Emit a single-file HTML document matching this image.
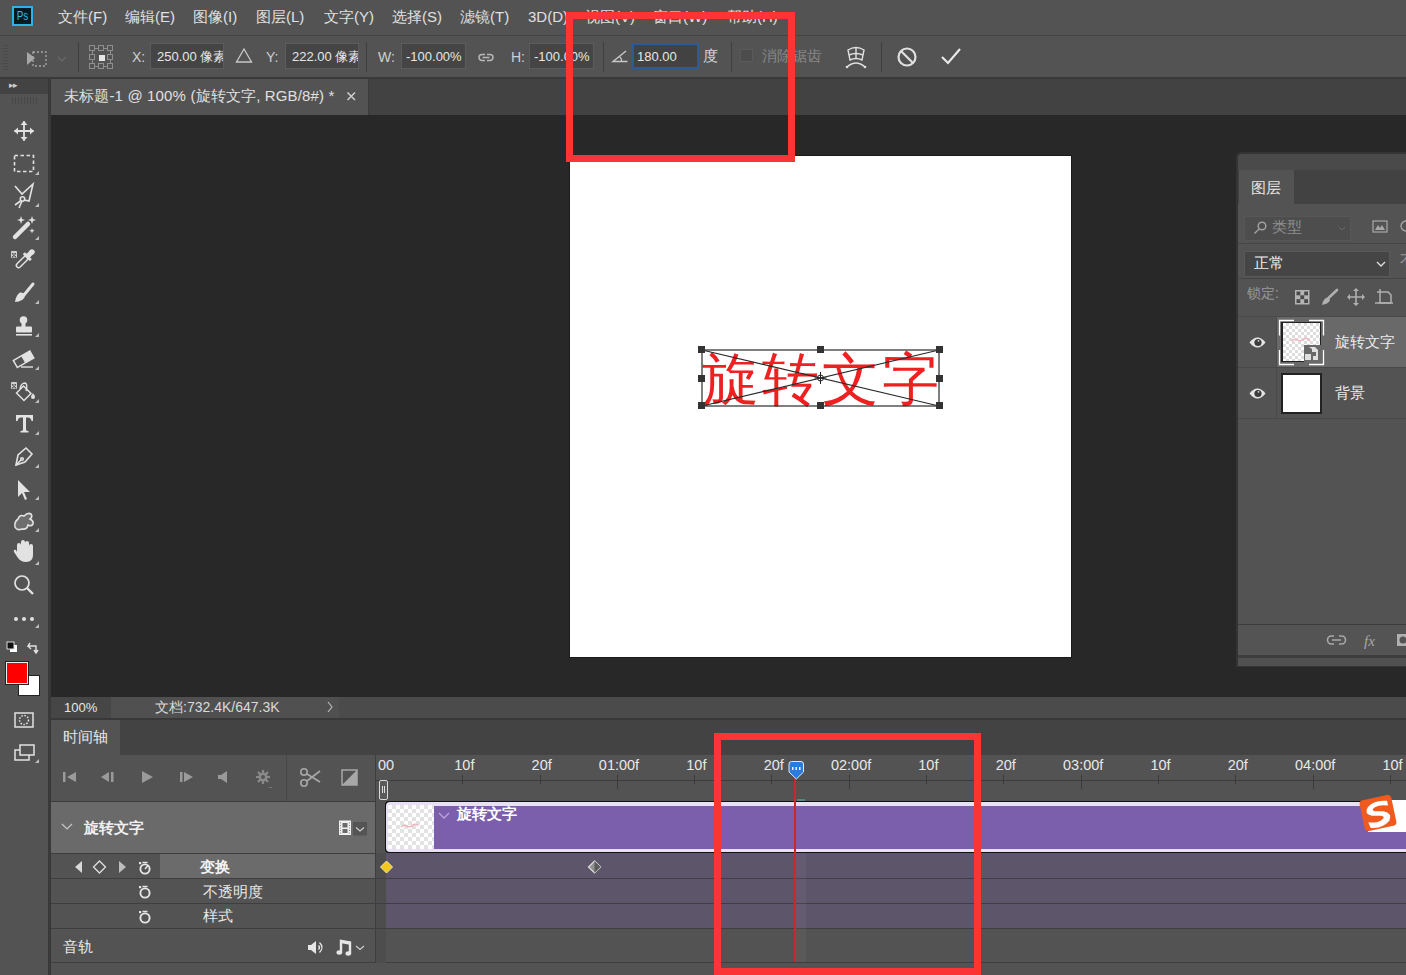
<!DOCTYPE html>
<html><head><meta charset="utf-8">
<style>
*{box-sizing:border-box;margin:0;padding:0}
html,body{width:1406px;height:975px;overflow:hidden;background:#282828;font-family:"Liberation Sans",sans-serif;color:#dcdcdc}
.a{position:absolute}
.t{position:absolute;white-space:nowrap;line-height:1}
svg{position:absolute;overflow:visible}
.m{font-size:15px;color:#e0e0e0;top:9px}
.inp{position:absolute;top:43px;height:26px;background:#454545;border:1px solid #5c5c5c}
.lbl{font-size:14px;color:#d0d0d0;top:50px}
.sep{position:absolute;width:1px;background:#3f3f3f}
</style></head><body>
<!-- menu bar -->
<div class="a" style="left:0;top:0;width:1406px;height:35px;background:#535353"></div>
<div class="a" style="left:0;top:35px;width:1406px;height:1px;background:#444"></div>
<!-- PS logo -->
<div class="a" style="left:12px;top:6px;width:20.5px;height:20px;background:#001a24;border:2px solid #2cb2e8"></div>
<svg style="left:0;top:0" width="1" height="1"><text x="16.7" y="20" font-family="Liberation Sans" font-size="12.5" textLength="11.5" lengthAdjust="spacingAndGlyphs" fill="#33bde8">Ps</text></svg>
<div class="t m" style="left:58px">文件(F)</div>
<div class="t m" style="left:125px">编辑(E)</div>
<div class="t m" style="left:193px">图像(I)</div>
<div class="t m" style="left:256px">图层(L)</div>
<div class="t m" style="left:324px">文字(Y)</div>
<div class="t m" style="left:392px">选择(S)</div>
<div class="t m" style="left:460px">滤镜(T)</div>
<div class="t m" style="left:528px">3D(D)</div>
<div class="t m" style="left:585px">视图(V)</div>
<div class="t m" style="left:653px">窗口(W)</div>
<div class="t m" style="left:727px">帮助(H)</div>

<!-- options bar -->
<div class="a" style="left:0;top:36px;width:1406px;height:41px;background:#535353"></div>
<div class="a" style="left:0;top:77px;width:1406px;height:2px;background:#3a3a3a"></div>
<!-- grip -->
<div class="a" style="left:3px;top:45px;width:5px;height:26px;background:repeating-linear-gradient(#4a4a4a 0 1px,transparent 1px 3px)"></div>
<!-- transform tool icon -->
<svg style="left:0;top:0" width="1" height="1">
 <path d="M27 52 L27 65 L35 58 Z" fill="#a8a8a8"/>
 <rect x="33" y="52" width="13" height="14" fill="none" stroke="#a8a8a8" stroke-width="1.3" stroke-dasharray="2 2"/>
 <path d="M58 57 L62 61 L66 57" fill="none" stroke="#6a6a6a" stroke-width="1.2"/>
</svg>
<div class="sep" style="left:78px;top:42px;height:30px"></div>
<!-- ref grid -->
<svg style="left:0;top:0" width="1" height="1">
 <g fill="none" stroke="#8e8e8e" stroke-width="1">
  <rect x="89.5" y="45.5" width="5" height="5"/><rect x="98.5" y="45.5" width="5" height="5"/><rect x="107.5" y="45.5" width="5" height="5"/>
  <rect x="89.5" y="54.5" width="5" height="5"/><rect x="107.5" y="54.5" width="5" height="5"/>
  <rect x="89.5" y="63.5" width="5" height="5"/><rect x="98.5" y="63.5" width="5" height="5"/><rect x="107.5" y="63.5" width="5" height="5"/>
  <path d="M95 48.5h3M104 48.5h3M95 66.5h3M104 66.5h3M92.5 51v3M92.5 60v3M110.5 51v3M110.5 60v3"/>
 </g>
 <rect x="99" y="55" width="6" height="6" fill="#e6e6e6"/>
</svg>
<div class="t lbl" style="left:132px">X:</div>
<div class="inp" style="left:150px;width:74px;overflow:hidden"><div class="t" style="left:6px;top:6px;font-size:13px;color:#e6e6e6">250.00 像素</div></div>
<svg style="left:0;top:0" width="1" height="1"><path d="M244 49 L251.5 62 L236.5 62 Z" fill="none" stroke="#c8c8c8" stroke-width="1.3"/></svg>
<div class="t lbl" style="left:266px">Y:</div>
<div class="inp" style="left:285px;width:74px;overflow:hidden"><div class="t" style="left:6px;top:6px;font-size:13px;color:#e6e6e6">222.00 像素</div></div>
<div class="sep" style="left:366px;top:42px;height:30px"></div>
<div class="t lbl" style="left:378px">W:</div>
<div class="inp" style="left:401px;width:65px"><div class="t" style="left:4px;top:6px;font-size:13px;color:#e6e6e6">-100.00%</div></div>
<svg style="left:0;top:0" width="1" height="1"><g fill="none" stroke="#b8b8b8" stroke-width="1.5"><path d="M485 54.5 H482 A3 3 0 0 0 482 60.5 H485 M487 54.5 H490 A3 3 0 0 1 490 60.5 H487 M482.5 57.5 H489.5"/></g></svg>
<div class="t lbl" style="left:511px">H:</div>
<div class="inp" style="left:529px;width:65px"><div class="t" style="left:4px;top:6px;font-size:13px;color:#e6e6e6">-100.00%</div></div>
<div class="sep" style="left:603px;top:42px;height:30px"></div>
<svg style="left:0;top:0" width="1" height="1"><path d="M626 51 L613 61.5 L627.5 61.5" fill="none" stroke="#c8c8c8" stroke-width="1.4"/><path d="M619.5 56.5 Q622 58.5 621.5 61.5" fill="none" stroke="#c8c8c8" stroke-width="1.1"/></svg>
<div class="inp" style="left:632px;width:67px;border:2px solid #2d5b95;background:#424242"><div class="t" style="left:3px;top:5px;font-size:13px;color:#e6e6e6">180.00</div></div>
<div class="t" style="left:703px;top:48px;font-size:15px;color:#d8d8d8">度</div>
<div class="sep" style="left:731px;top:42px;height:30px"></div>
<div class="a" style="left:740px;top:49px;width:13px;height:13px;background:#4c4c4c;border:1px solid #5a5a5a"></div>
<div class="t" style="left:762px;top:48px;font-size:15px;color:#888">消除锯齿</div>
<!-- warp icon -->
<svg style="left:0;top:0" width="1" height="1"><g fill="none" stroke="#e0e0e0" stroke-width="1.4">
 <path d="M848 50 Q856 45 864 50 L862 60 Q856 57 850 60 Z"/><path d="M849 55 Q856 52 863 55"/><path d="M856 48 V58"/>
 <path d="M847 67 Q856 59 865 67"/></g>
 <circle cx="847" cy="67" r="1.3" fill="#e0e0e0"/><circle cx="865" cy="67" r="1.3" fill="#e0e0e0"/>
</svg>
<div class="sep" style="left:881px;top:42px;height:30px"></div>
<svg style="left:0;top:0" width="1" height="1"><g fill="none" stroke="#e0e0e0" stroke-width="2.2"><circle cx="907" cy="57" r="8.5"/><path d="M901 51 L913 63"/></g>
<path d="M942 57 L948 63 L960 49" fill="none" stroke="#e8e8e8" stroke-width="2.2"/></svg>
<!-- toolbar -->
<div class="a" style="left:0;top:79px;width:48px;height:896px;background:#535353"></div>
<div class="a" style="left:0;top:79px;width:48px;height:15px;background:#434343"></div>
<div class="t" style="left:9px;top:81px;font-size:9px;color:#cfcfcf;letter-spacing:-1px">▸▸</div>
<div class="a" style="left:12px;top:97px;width:25px;height:7px;background:repeating-linear-gradient(90deg,#474747 0 1px,transparent 1px 3px)"></div>
<div class="a" style="left:48px;top:79px;width:3px;height:896px;background:#393939"></div>
<svg style="left:0;top:0" width="1" height="1">
<g fill="none" stroke="#e2e2e2" stroke-width="1.8" stroke-linecap="round">
 <!-- move -->
 <path d="M24 122 V140 M15 131 H33"/>
</g>
<g fill="#e2e2e2">
 <path d="M24 121 L20.5 125 H27.5Z M24 141 L20.5 137 H27.5Z M14 131 L18 127.5 V134.5Z M34 131 L30 127.5 V134.5Z"/>
 <!-- corner triangles -->
 <path d="M39 171 V175 H35Z M39 203 V207 H35Z M39 236 V240 H35Z M39 300 V304 H35Z M39 333 V337 H35Z M39 366 V370 H35Z M39 399 V403 H35Z M39 431 V435 H35Z M39 464 V468 H35Z M39 496 V500 H35Z M39 528 V532 H35Z M39 561 V565 H35Z M39 624 V628 H35Z M39 759 V763 H35Z" fill="#bdbdbd"/>
</g>
<!-- marquee -->
<rect x="14.5" y="155.5" width="19" height="16" fill="none" stroke="#e2e2e2" stroke-width="1.6" stroke-dasharray="3.5 2.5"/>
<!-- lasso -->
<g fill="none" stroke="#e2e2e2" stroke-width="1.6">
 <path d="M15 186 L22 194 L33 184 L29 201 L24 200"/><circle cx="22.5" cy="199" r="2.2"/><path d="M20.5 201 L15 205 M22 201 L19 208"/>
</g>
<!-- magic wand -->
<path d="M15 237 L28 224" stroke="#e2e2e2" stroke-width="4.5" stroke-linecap="round"/>
<g fill="#e2e2e2"><path d="M21 216 l1 3 3 1 -3 1 -1 3 -1 -3 -3 -1 3 -1z M32 216 l1 3 3 1 -3 1 -1 3 -1 -3 -3 -1 3 -1z M32 228 l.7 2 2 .7 -2 .7 -.7 2 -.7 -2 -2 -.7 2 -.7z"/></g>
<!-- eyedropper -->
<g transform="rotate(-45 22 262)"><rect x="15" y="259.8" width="14" height="4.4" rx="2.2" fill="none" stroke="#e2e2e2" stroke-width="1.5"/>
<rect x="28" y="257" width="3" height="10" rx="1" fill="#e2e2e2"/><rect x="30" y="259.5" width="5" height="5" fill="#e2e2e2"/><circle cx="36" cy="262" r="2.8" fill="#e2e2e2"/></g>
<g fill="#d0d0d0"><rect x="11" y="251" width="6" height="7" rx="1"/></g><g fill="#535353"><rect x="12" y="253" width="1.5" height="1.5"/><rect x="14.5" y="253" width="1.5" height="1.5"/><rect x="13.2" y="254.5" width="1.5" height="1.5"/><rect x="12" y="256" width="1.5" height="1.5"/><rect x="14.5" y="256" width="1.5" height="1.5"/></g>
<!-- brush -->
<path d="M24 295 L33 284" stroke="#e2e2e2" stroke-width="3" stroke-linecap="round"/>
<path d="M15 302 Q16 295 20 292.5 Q23 292 25 294.5 Q25 298 22 300 Q19 302 15 302Z" fill="#e2e2e2"/>
<!-- stamp -->
<g fill="#e2e2e2"><circle cx="23.5" cy="320" r="3.8"/><rect x="21.5" y="322" width="4" height="5"/><rect x="16" y="326.5" width="16" height="6" rx="1"/><rect x="16" y="334" width="16" height="1.6"/></g>
<!-- eraser -->
<g transform="rotate(-30 24 359)"><rect x="14" y="355" width="19" height="8" fill="none" stroke="#e2e2e2" stroke-width="1.5"/><rect x="23" y="355" width="10" height="8" fill="#e2e2e2"/></g>
<path d="M21 367 H33" stroke="#e2e2e2" stroke-width="1.4"/>
<!-- bucket -->
<path d="M16.5 393 L23.5 386 L31 393.5 L24 400.5Z" fill="none" stroke="#e2e2e2" stroke-width="1.5"/>
<path d="M20 389 Q21 383 25 383 Q28 384 26 391" fill="none" stroke="#e2e2e2" stroke-width="1.4"/>
<circle cx="33" cy="397" r="2" fill="#e2e2e2"/><path d="M33 393 L34.7 396 H31.3Z" fill="#e2e2e2"/>
<g fill="#d0d0d0"><rect x="11" y="382" width="6" height="7" rx="1"/></g><g fill="#535353"><rect x="12" y="384" width="1.5" height="1.5"/><rect x="14.5" y="384" width="1.5" height="1.5"/><rect x="13.2" y="385.5" width="1.5" height="1.5"/><rect x="12" y="387" width="1.5" height="1.5"/><rect x="14.5" y="387" width="1.5" height="1.5"/></g>
<!-- pen -->
<g fill="none" stroke="#e2e2e2" stroke-width="1.6"><path d="M16 465 L18 455 L26 448 L32 454 L25 462Z"/><path d="M16 465 L21 460"/><circle cx="22" cy="459" r="1.3"/></g>
<!-- path selection arrow -->
<path d="M18 480 L18 497 L22 493 L25 500 L27 499 L24 492 L30 492Z" fill="#e2e2e2"/>
<!-- shape blob -->
<path d="M15 527 Q14 522 18 519 Q20 514 24 516 Q28 512 31 514 Q33 517 30 519 Q34 521 33 524 Q31 527 28 525 Q27 530 22 529 Q17 531 15 527Z" fill="#6e6e6e" stroke="#e2e2e2" stroke-width="1.6"/>
<!-- hand -->
<path d="M17 552 V545 Q17 543 19 543 Q21 543 21 545 V550 V542 Q21 540 23 540 Q25 540 25 542 V550 V543 Q25 541 27 541 Q29 541 29 543 V551 V546 Q29 544 31 544 Q33 544 33 546 V555 Q33 562 26 562 Q21 562 18 558 L14 552 Q13 549 16 550Z" fill="#e2e2e2"/>
<!-- zoom -->
<g fill="none" stroke="#e2e2e2" stroke-width="1.7"><circle cx="22" cy="583" r="7"/><path d="M27 588 L33 594" stroke-width="2.4"/></g>
<!-- more -->
<g fill="#e2e2e2"><circle cx="16" cy="619" r="2"/><circle cx="24" cy="619" r="2"/><circle cx="32" cy="619" r="2"/></g>
<!-- small default colors -->
<rect x="10" y="645" width="7" height="7" fill="#fff"/><rect x="7" y="642" width="7" height="7" fill="#111" stroke="#ddd" stroke-width="1"/>
<path d="M30 643 L28 646 H36 V652 M34 650 L36 653 L38 650 M28 646 L31 649" fill="none" stroke="#e2e2e2" stroke-width="1.4"/>
</g>
<!-- text T -->
<path d="M16 415 H33 V421 H31.5 Q31 417.5 28 417.5 H26 V429.5 Q26 431 28.5 431 V432.5 H20.5 V431 Q23 431 23 429.5 V417.5 H21 Q18 417.5 17.5 421 H16Z" fill="#e2e2e2"/>
</svg>
<!-- fg/bg colors -->
<div class="a" style="left:18px;top:675px;width:22px;height:21px;background:#fff;border:1px solid #222"></div>
<div class="a" style="left:6px;top:662px;width:22px;height:22px;background:#f00;border:1px solid #eee;outline:1px solid #222"></div>
<svg style="left:0;top:0" width="1" height="1">
<g fill="none" stroke="#e2e2e2" stroke-width="1.5">
 <rect x="15" y="713" width="18" height="14"/><circle cx="24" cy="720" r="4.5" stroke-dasharray="1.5 1.5"/>
 <rect x="20" y="745" width="14" height="10"/><path d="M20 750 H15 V760 H29 V755"/>
</g>
</svg>

<!-- doc tab row -->
<div class="a" style="left:51px;top:79px;width:1355px;height:36px;background:#424242"></div>
<div class="a" style="left:51px;top:79px;width:317px;height:36px;background:#535353"></div>
<div class="a" style="left:368px;top:79px;width:1px;height:36px;background:#3c3c3c"></div>
<div class="t" style="left:64px;top:88px;font-size:15px;letter-spacing:0.15px;color:#e0e0e0">未标题-1 @ 100% (旋转文字, RGB/8#) *</div>
<svg style="left:0;top:0" width="1" height="1"><path d="M347.5 92.5 L355 100 M355 92.5 L347.5 100" stroke="#cfcfcf" stroke-width="1.5"/></svg>

<!-- canvas -->
<div class="a" style="left:570px;top:156px;width:501px;height:501px;background:#fff;box-shadow:0 0 0 1px #1a1a1a"></div>
<div class="t" style="left:702px;top:351px;font-size:57px;color:#ee2020;font-family:'Liberation Serif',serif;font-weight:300;letter-spacing:3px">旋转文字</div>
<svg style="left:0;top:0" width="1" height="1">
 <g fill="none" stroke="#2a2a2a" stroke-width="1.2">
  <rect x="702" y="350" width="237" height="56"/>
  <path d="M702 350 L939 406 M702 406 L939 350"/>
 </g>
 <g fill="#333">
  <rect x="698" y="346" width="7" height="7"/><rect x="817" y="346" width="7" height="7"/><rect x="936" y="346" width="7" height="7"/>
  <rect x="698" y="375" width="7" height="7"/><rect x="936" y="375" width="7" height="7"/>
  <rect x="698" y="402" width="7" height="7"/><rect x="817" y="402" width="7" height="7"/><rect x="936" y="402" width="7" height="7"/>
 </g>
 <g fill="none" stroke="#222" stroke-width="1"><circle cx="820.5" cy="378" r="3"/><path d="M820.5 372 V384 M814.5 378 H826.5"/></g>
</svg>
<!-- layers panel -->
<div class="a" style="left:1236px;top:152px;width:170px;height:515px;background:#343434;border-top-left-radius:5px"></div>
<div class="a" style="left:1238px;top:154px;width:168px;height:16px;background:#4a4a4a;border-top-left-radius:4px"></div>
<div class="a" style="left:1238px;top:170px;width:168px;height:34px;background:#424242"></div>
<div class="a" style="left:1239px;top:170px;width:55px;height:34px;background:#535353"></div>
<div class="t" style="left:1251px;top:180px;font-size:15px;color:#e6e6e6">图层</div>
<div class="a" style="left:1238px;top:204px;width:168px;height:421px;background:#535353"></div>
<div class="a" style="left:1244px;top:216px;width:107px;height:25px;background:#4d4d4d;border:1px solid #575757"></div>
<svg style="left:0;top:0" width="1" height="1"><g fill="none" stroke="#a0a0a0" stroke-width="1.5"><circle cx="1262" cy="226" r="3.8"/><path d="M1259 229 L1254.5 233.5"/></g>
<path d="M1339 227 L1342 230 L1345 227" fill="none" stroke="#6a6a6a" stroke-width="1"/>
<g fill="none" stroke="#a8a8a8" stroke-width="1.2"><rect x="1373" y="221" width="14" height="11"/></g><path d="M1375 230 L1378 225 L1380 228 L1382 225 L1385 230Z" fill="#a8a8a8"/>
<circle cx="1406" cy="226" r="5" fill="none" stroke="#a8a8a8" stroke-width="1.3"/>
</svg>
<div class="t" style="left:1272px;top:219px;font-size:15px;color:#8e8e8e">类型</div>
<div class="a" style="left:1238px;top:243px;width:168px;height:1px;background:#454545"></div>
<div class="a" style="left:1244px;top:251px;width:146px;height:26px;background:#454545;border:1px solid #595959"></div>
<div class="t" style="left:1254px;top:255px;font-size:15px;color:#f0f0f0">正常</div>
<svg style="left:0;top:0" width="1" height="1"><path d="M1377 262 L1381 266 L1385 262" fill="none" stroke="#e0e0e0" stroke-width="1.3"/>
</svg>
<div class="a" style="left:1238px;top:278px;width:168px;height:1px;background:#454545"></div>
<div class="t" style="left:1247px;top:286px;font-size:14px;color:#9a9a9a">锁定:</div>
<div class="t" style="left:1400px;top:253px;font-size:14px;color:#9a9a9a">不透明度:</div>
<svg style="left:0;top:0" width="1" height="1">
 <rect x="1295.5" y="290.5" width="13.5" height="13.5" fill="#b4b4b4" stroke="#b4b4b4" stroke-width="1"/>
 <g fill="#4a4a4a"><rect x="1296.5" y="291.5" width="3.8" height="3.8"/><rect x="1304.2" y="291.5" width="3.8" height="3.8"/><rect x="1300.3" y="295.3" width="3.9" height="3.9"/><rect x="1296.5" y="299.2" width="3.8" height="3.8"/><rect x="1304.2" y="299.2" width="3.8" height="3.8"/></g>
 <path d="M1328.5 298 L1337 290" stroke="#b0b0b0" stroke-width="2.6" stroke-linecap="round"/><path d="M1322 305 Q1323 299 1327 297.5 Q1330 298 1330 300.5 Q1328 304 1322 305Z" fill="#b0b0b0"/>
 <g fill="none" stroke="#b0b0b0" stroke-width="1.6"><path d="M1356 289 V305 M1348 297 H1364"/></g>
 <g fill="#b0b0b0"><path d="M1356 288 L1353 291 H1359Z M1356 306 L1353 303 H1359Z M1347 297 L1350 294 V300Z M1365 297 L1362 294 V300Z"/></g>
 <g fill="none" stroke="#b0b0b0" stroke-width="1.5"><path d="M1377 292 H1388 L1391 295 V303 M1380 289 V303 H1391"/><path d="M1375 303 H1393"/></g>
</svg>
<!-- layer row 1 -->
<div class="a" style="left:1238px;top:316px;width:168px;height:1px;background:#4a4a4a"></div>
<div class="a" style="left:1277px;top:317px;width:129px;height:50px;background:#696969"></div>
<div class="a" style="left:1276px;top:317px;width:1px;height:101px;background:#4a4a4a"></div>
<svg style="left:0;top:0" width="1" height="1">
 <path d="M1249.5 342.5 Q1257.5 332.5 1265.5 342.5 Q1257.5 352.5 1249.5 342.5Z" fill="#e6e6e6"/><circle cx="1258" cy="342.5" r="3.6" fill="#3c3c3c"/><circle cx="1258.5" cy="340.8" r=".9" fill="#ddd"/>
 <path d="M1249.5 393.5 Q1257.5 383.5 1265.5 393.5 Q1257.5 403.5 1249.5 393.5Z" fill="#e6e6e6"/><circle cx="1258" cy="393.5" r="3.6" fill="#3c3c3c"/><circle cx="1258.5" cy="391.8" r=".9" fill="#ddd"/>
</svg>
<div class="a" style="left:1281px;top:321.5px;width:40px;height:40.5px;background:#222"></div>
<div class="a" style="left:1282.5px;top:323px;width:37px;height:37.5px;background-color:#fff;background-image:linear-gradient(45deg,#ddd 25%,transparent 25%,transparent 75%,#ddd 75%),linear-gradient(45deg,#ddd 25%,transparent 25%,transparent 75%,#ddd 75%);background-size:6px 6px;background-position:0 0,3px 3px"></div>
<svg style="left:0;top:0" width="1" height="1"><path d="M1291 341 Q1295 338 1298 340 Q1301 342 1304 339 Q1307 337 1310 341" fill="none" stroke="#f2b8c4" stroke-width="1.5"/></svg>
<div class="a" style="left:1304px;top:344.5px;width:17.5px;height:17.5px;background:#696969"></div>
<svg style="left:0;top:0" width="1" height="1">
 <g fill="#e0e0e0"><path d="M1309 347 H1315 L1318 350 V360 H1313 V356 H1316 V352 H1312 V349Z"/><rect x="1305" y="354" width="6" height="6"/></g>
 <g fill="none" stroke="#fff" stroke-width="1.3"><path d="M1279.5 335.5 V320.5 H1294 M1309 320.5 H1323.5 V335.5 M1279.5 350 V364.5 H1294 M1309 364.5 H1323.5 V350"/></g>
</svg>
<div class="t" style="left:1335px;top:334px;font-size:15px;color:#ececec">旋转文字</div>
<div class="a" style="left:1238px;top:367px;width:168px;height:1px;background:#484848"></div>
<!-- layer row 2 -->
<div class="a" style="left:1281px;top:373px;width:41px;height:41px;background:#222"></div>
<div class="a" style="left:1283px;top:375px;width:37px;height:37px;background:#fff"></div>
<div class="t" style="left:1335px;top:385px;font-size:15px;color:#ececec">背景</div>
<div class="a" style="left:1238px;top:418px;width:168px;height:1px;background:#484848"></div>
<!-- footer -->
<div class="a" style="left:1238px;top:624px;width:168px;height:1px;background:#3c3c3c"></div>
<div class="a" style="left:1238px;top:625px;width:168px;height:30px;background:#545454"></div>
<svg style="left:0;top:0" width="1" height="1">
 <g fill="none" stroke="#a8a8a8" stroke-width="1.6"><path d="M1334 636 H1331.5 A4 4 0 0 0 1331.5 644 H1334 M1339 636 H1341.5 A4 4 0 0 1 1341.5 644 H1339 M1332 640 H1341"/></g>
 <text x="1364" y="646" font-family="Liberation Serif" font-style="italic" font-size="15" fill="#a8a8a8">fx</text>
 <rect x="1397" y="634" width="12" height="12" fill="#b0b0b0"/><circle cx="1403" cy="640" r="3.5" fill="#545454"/>
</svg>
<div class="a" style="left:1238px;top:655px;width:168px;height:3px;background:#3d3d3d"></div>
<div class="a" style="left:1238px;top:658px;width:168px;height:8px;background:#505050"></div>

<!-- status bar -->
<div class="a" style="left:51px;top:697px;width:1355px;height:21px;background:#4b4b4b"></div>
<div class="a" style="left:51px;top:697px;width:60px;height:21px;background:#464646"></div>
<div class="a" style="left:111px;top:697px;width:228px;height:21px;background:#505050"></div>
<div class="t" style="left:64px;top:701px;font-size:13px;color:#e6e6e6">100%</div>
<div class="t" style="left:155px;top:700px;font-size:14px;color:#dadada">文档:732.4K/647.3K</div>
<svg style="left:0;top:0" width="1" height="1"><path d="M328 702 L332 707 L328 712" fill="none" stroke="#c0c0c0" stroke-width="1.1"/></svg>
<!-- timeline panel -->
<div class="a" style="left:51px;top:718px;width:1355px;height:2px;background:#383838"></div>
<div class="a" style="left:51px;top:720px;width:1355px;height:35px;background:#434343"></div>
<div class="a" style="left:51px;top:720px;width:69px;height:35px;background:#535353"></div>
<div class="t" style="left:63px;top:729px;font-size:15px;color:#e6e6e6">时间轴</div>
<div class="a" style="left:51px;top:755px;width:1355px;height:220px;background:#535353"></div>
<!-- controls -->
<svg style="left:0;top:0" width="1" height="1">
 <g fill="#9a9a9a">
  <rect x="63" y="772" width="2.5" height="10"/><path d="M76 772 V782 L67 777Z"/>
  <path d="M109 772 V782 L101 777Z"/><rect x="111" y="772" width="2.5" height="10"/>
  <path d="M142 771 V783 L153 777Z"/>
  <rect x="180" y="772" width="2.5" height="10"/><path d="M184 772 V782 L193 777Z"/>
  <path d="M218 775 H221 L227 771 V783 L221 779 H218Z"/>
 </g>
 <g fill="#8a8a8a"><circle cx="263" cy="777" r="4.5"/></g>
 <g stroke="#8a8a8a" stroke-width="2.2"><path d="M263 770 V784 M256 777 H270 M258 772 L268 782 M268 772 L258 782"/></g>
 <circle cx="263" cy="777" r="2" fill="#535353"/>
 <rect x="269" y="787" width="3" height="1" fill="#777"/>
 <g fill="none" stroke="#a8a8a8" stroke-width="1.6"><circle cx="304" cy="772" r="3.2"/><circle cx="304" cy="783" r="3.2"/><path d="M307 774 L320 782 M307 781 L320 771"/></g>
 <rect x="342" y="770" width="15" height="15" fill="none" stroke="#a8a8a8" stroke-width="1.5"/><path d="M342 785 L357 770 V785Z" fill="#a8a8a8"/>
</svg>
<div class="a" style="left:286px;top:755px;width:1px;height:46px;background:#474747"></div>
<!-- ruler -->
<div class="a" style="left:375px;top:755px;width:1px;height:208px;background:#3e3e3e"></div>
<div class="a" style="left:376px;top:780px;width:1030px;height:1px;background:#3c3c3c"></div>
<div class="t" style="left:378px;top:758px;font-size:14.5px;color:#e8e8e8">00</div>
<div class="a" style="left:462.2px;top:775px;width:1px;height:9px;background:#3a3a3a"></div>
<div class="t" style="left:424.4px;width:80px;text-align:center;top:758px;font-size:14.5px;color:#e8e8e8">10f</div>
<div class="a" style="left:539.5px;top:775px;width:1px;height:9px;background:#3a3a3a"></div>
<div class="t" style="left:501.7px;width:80px;text-align:center;top:758px;font-size:14.5px;color:#e8e8e8">20f</div>
<div class="a" style="left:616.8px;top:775px;width:1px;height:14px;background:#3a3a3a"></div>
<div class="t" style="left:579.0px;width:80px;text-align:center;top:758px;font-size:14.5px;color:#e8e8e8">01:00f</div>
<div class="a" style="left:694.1px;top:775px;width:1px;height:9px;background:#3a3a3a"></div>
<div class="t" style="left:656.4px;width:80px;text-align:center;top:758px;font-size:14.5px;color:#e8e8e8">10f</div>
<div class="a" style="left:771.4px;top:775px;width:1px;height:9px;background:#3a3a3a"></div>
<div class="t" style="left:733.8px;width:80px;text-align:center;top:758px;font-size:14.5px;color:#e8e8e8">20f</div>
<div class="a" style="left:848.7px;top:775px;width:1px;height:14px;background:#3a3a3a"></div>
<div class="t" style="left:811.1px;width:80px;text-align:center;top:758px;font-size:14.5px;color:#e8e8e8">02:00f</div>
<div class="a" style="left:926.0px;top:775px;width:1px;height:9px;background:#3a3a3a"></div>
<div class="t" style="left:888.4px;width:80px;text-align:center;top:758px;font-size:14.5px;color:#e8e8e8">10f</div>
<div class="a" style="left:1003.3px;top:775px;width:1px;height:9px;background:#3a3a3a"></div>
<div class="t" style="left:965.8px;width:80px;text-align:center;top:758px;font-size:14.5px;color:#e8e8e8">20f</div>
<div class="a" style="left:1080.6px;top:775px;width:1px;height:14px;background:#3a3a3a"></div>
<div class="t" style="left:1043.2px;width:80px;text-align:center;top:758px;font-size:14.5px;color:#e8e8e8">03:00f</div>
<div class="a" style="left:1157.9px;top:775px;width:1px;height:9px;background:#3a3a3a"></div>
<div class="t" style="left:1120.5px;width:80px;text-align:center;top:758px;font-size:14.5px;color:#e8e8e8">10f</div>
<div class="a" style="left:1235.2px;top:775px;width:1px;height:9px;background:#3a3a3a"></div>
<div class="t" style="left:1197.8px;width:80px;text-align:center;top:758px;font-size:14.5px;color:#e8e8e8">20f</div>
<div class="a" style="left:1312.5px;top:775px;width:1px;height:14px;background:#3a3a3a"></div>
<div class="t" style="left:1275.2px;width:80px;text-align:center;top:758px;font-size:14.5px;color:#e8e8e8">04:00f</div>
<div class="a" style="left:1389.8px;top:775px;width:1px;height:9px;background:#3a3a3a"></div>
<div class="t" style="left:1352.5px;width:80px;text-align:center;top:758px;font-size:14.5px;color:#e8e8e8">10f</div>
<!-- work area handle -->
<div class="a" style="left:379px;top:780px;width:9px;height:20px;background:#5a5a5a;border:1.5px solid #d8d8d8;border-radius:2px"></div>
<div class="a" style="left:381.5px;top:786px;width:1.3px;height:7px;background:#e0e0e0"></div>
<div class="a" style="left:384px;top:786px;width:1.3px;height:7px;background:#e0e0e0"></div>
<!-- track list -->
<div class="a" style="left:51px;top:801px;width:324px;height:1px;background:#3c3c3c"></div>
<div class="a" style="left:51px;top:802px;width:324px;height:51px;background:#6a6a6a"></div>
<svg style="left:0;top:0" width="1" height="1"><path d="M62 824 L67 829 L72 824" fill="none" stroke="#c8c8c8" stroke-width="1.2"/></svg>
<div class="t" style="left:84px;top:820px;font-size:15px;font-weight:bold;color:#f0f0f0">旋转文字</div>
<svg style="left:0;top:0" width="1" height="1">
 <rect x="339" y="820.5" width="12" height="14.5" fill="#f0f0f0"/>
 <g fill="#6a6a6a"><rect x="342.5" y="823" width="5" height="4.5"/><rect x="342.5" y="829" width="5" height="4"/></g>
 <g fill="#777"><circle cx="340.5" cy="822.8" r=".6"/><circle cx="340.5" cy="825.5" r=".6"/><circle cx="340.5" cy="828" r=".6"/><circle cx="340.5" cy="830.5" r=".6"/><circle cx="340.5" cy="833" r=".6"/><circle cx="349.5" cy="822.8" r=".6"/><circle cx="349.5" cy="825.5" r=".6"/><circle cx="349.5" cy="828" r=".6"/><circle cx="349.5" cy="830.5" r=".6"/><circle cx="349.5" cy="833" r=".6"/></g>
 <rect x="353" y="822" width="14" height="13.5" fill="#545454"/><path d="M356 827.5 L360 831 L364 827.5" fill="none" stroke="#d0d0d0" stroke-width="1.1"/>
</svg>
<div class="a" style="left:51px;top:853px;width:324px;height:1px;background:#3e3e3e"></div>
<div class="a" style="left:51px;top:854px;width:109px;height:24px;background:#535353"></div>
<div class="a" style="left:160px;top:854px;width:215px;height:24px;background:#6b6b6b"></div>
<svg style="left:0;top:0" width="1" height="1">
 <path d="M82 861 V873 L75 867Z" fill="#d8d8d8"/>
 <path d="M99.5 861 L105.5 867 L99.5 873 L93.5 867Z" fill="none" stroke="#e0e0e0" stroke-width="1.3"/>
 <path d="M119 861 V873 L126 867Z" fill="#bdbdbd"/>
</svg>
<div class="t" style="left:200px;top:859px;font-size:15px;font-weight:bold;color:#f4f4f4">变换</div>
<div class="a" style="left:51px;top:878px;width:324px;height:1px;background:#3e3e3e"></div>
<div class="t" style="left:203px;top:884px;font-size:15px;color:#e8e8e8">不透明度</div>
<div class="a" style="left:51px;top:903px;width:324px;height:1px;background:#3e3e3e"></div>
<div class="t" style="left:203px;top:908px;font-size:15px;color:#e8e8e8">样式</div>
<div class="a" style="left:51px;top:928px;width:324px;height:1px;background:#3e3e3e"></div>
<div class="t" style="left:63px;top:939px;font-size:15px;color:#e8e8e8">音轨</div>
<svg style="left:0;top:0" width="1" height="1">
 <g fill="none" stroke="#e6e6e6" stroke-width="1.9"><circle cx="145" cy="869" r="4.6"/><circle cx="145" cy="893" r="4.6"/><circle cx="145" cy="918" r="4.6"/>
 <path d="M142.5 862.5 H147.5 M142.5 886.5 H147.5 M142.5 911.5 H147.5" stroke-width="1.6"/></g>
 <g fill="#e6e6e6"><rect x="139" y="862" width="2.2" height="2.2"/><rect x="139" y="886" width="2.2" height="2.2"/><rect x="139" y="911" width="2.2" height="2.2"/></g>
 <path d="M145 869 L148 865.5" stroke="#e6e6e6" stroke-width="1.5"/>
 <path d="M308 945 H311 L316 941 V954 L311 950 H308Z" fill="#e6e6e6"/>
 <path d="M318.5 945.5 Q320.5 947.5 318.5 949.5" fill="none" stroke="#e6e6e6" stroke-width="1.4"/>
 <path d="M319.5 942.5 Q324.5 947.5 319.5 952.5" fill="none" stroke="#e6e6e6" stroke-width="1.3"/>
 <path d="M341 953 V941 L350 942.5 V954" fill="none" stroke="#e6e6e6" stroke-width="2.4"/>
 <path d="M340 940 L351 942 V945 L340 943Z" fill="#e6e6e6"/>
 <ellipse cx="339.3" cy="952.5" rx="2.8" ry="2.2" fill="#e6e6e6"/><ellipse cx="348.3" cy="953.5" rx="2.8" ry="2.2" fill="#e6e6e6"/>
 <path d="M356 946 L360 949.5 L364 946" fill="none" stroke="#d0d0d0" stroke-width="1.1"/>
</svg>
<div class="a" style="left:51px;top:962px;width:1355px;height:1px;background:#3e3e3e"></div>

<!-- timeline tracks area -->
<div class="a" style="left:376px;top:853px;width:10px;height:110px;background:#4d4d4d"></div>
<div class="a" style="left:386px;top:853px;width:1020px;height:75px;background:#5d566b"></div>
<div class="a" style="left:376px;top:878px;width:1030px;height:1px;background:#3f3d45"></div>
<div class="a" style="left:376px;top:903px;width:1030px;height:1px;background:#3f3d45"></div>
<div class="a" style="left:376px;top:928px;width:1030px;height:1px;background:#3f3f3f"></div>
<div class="a" style="left:796px;top:853px;width:10px;height:109px;background:rgba(255,255,255,0.04)"></div>
<!-- clip -->
<div class="a" style="left:385px;top:801px;width:1021px;height:52px;background:#111;border-radius:4px 0 0 4px"></div>
<div class="a" style="left:386px;top:802px;width:1020px;height:50px;background:#e8e0f4;border-radius:4px 0 0 4px"></div>
<div class="a" style="left:434px;top:806px;width:972px;height:43px;background:#7b5fad"></div>
<div class="a" style="left:388px;top:805px;width:46px;height:44px;background-color:#fff;background-image:linear-gradient(45deg,#e2e2e2 25%,transparent 25%,transparent 75%,#e2e2e2 75%),linear-gradient(45deg,#e2e2e2 25%,transparent 25%,transparent 75%,#e2e2e2 75%);background-size:8px 8px;background-position:0 0,4px 4px"></div>
<svg style="left:0;top:0" width="1" height="1"><path d="M401 827 Q404 824 407 826 Q410 828 413 825 Q416 823 418 826" fill="none" stroke="#f0a8b4" stroke-width="1.2"/></svg>
<svg style="left:0;top:0" width="1" height="1"><path d="M439 813 L444 818 L449 813" fill="none" stroke="#b9a6dd" stroke-width="1.3"/></svg>
<div class="t" style="left:457px;top:806px;font-size:15px;font-weight:bold;color:#fff">旋转文字</div>
<!-- keyframes -->
<svg style="left:0;top:0" width="1" height="1">
 <path d="M386.5 861 L392.5 867 L386.5 873 L380.5 867Z" fill="#f2c81e" stroke="#f7e9a0" stroke-width="1"/>
 <path d="M594.5 861 L600.5 867 L594.5 873 L588.5 867Z" fill="#909090" stroke="#e0e0e0" stroke-width="1.2"/>
 <path d="M594.5 861 L600.5 867 L594.5 873Z" fill="#5a5a5a"/>
</svg>
<!-- playhead -->
<div class="a" style="left:794px;top:778px;width:2px;height:184px;background:#c8282e"></div>
<svg style="left:0;top:0" width="1" height="1">
 <path d="M789 764 Q789 761.5 791.5 761.5 H801 Q803.5 761.5 803.5 764 V772 L796.3 779 L789 772Z" fill="#2a7be0" stroke="#dde9f7" stroke-width="1"/>
 <g fill="#e8f0ff"><rect x="792" y="767" width="1.5" height="3"/><rect x="795.5" y="767" width="1.5" height="3"/><rect x="799" y="767" width="1.5" height="3"/></g>
</svg>
<div class="a" style="left:797px;top:799px;width:8px;height:1.5px;background:#4f8a7e"></div>

<!-- sogou icon -->
<svg style="left:0;top:0" width="1" height="1">
 <rect x="1368" y="800" width="38" height="32" fill="#fff"/>
 <g transform="translate(1378 813) rotate(-12) scale(0.95) translate(-1379 -815.5)"><rect x="1362" y="799" width="34" height="33" rx="4" fill="#f05a1e"/>
 <path d="M1391 805 Q1378 801 1370 807 Q1364 813 1372 817 L1382 819 Q1386 821 1382 823 Q1376 826 1367 823 L1368 829 Q1380 833 1389 826 Q1394 819 1385 815 L1376 813 Q1372 811 1377 809 Q1382 807 1391 810Z" fill="#fff"/></g>
</svg>

<!-- red boxes -->
<div class="a" style="left:566px;top:12px;width:229px;height:150px;border:7px solid #fb3535"></div>
<div class="a" style="left:714px;top:733px;width:267px;height:242px;border:7px solid #fb3535"></div>
</body></html>
